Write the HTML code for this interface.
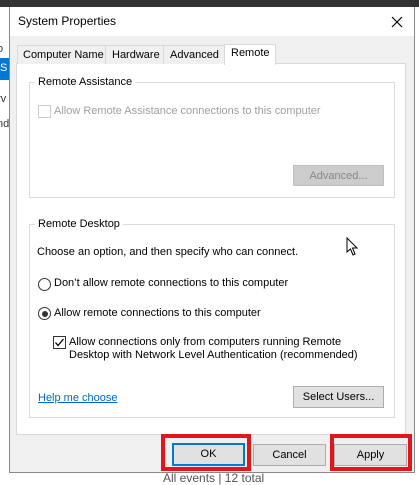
<!DOCTYPE html>
<html><head><style>
*{margin:0;padding:0;box-sizing:border-box}
body{width:419px;height:482px;overflow:hidden;background:#fff;font-family:"Liberation Sans",sans-serif;font-size:11px;color:#000;position:relative}
.a{position:absolute}
.t{position:absolute;white-space:nowrap}
.btn{position:absolute;background:#e1e1e1;border:1px solid #adadad;text-align:center;line-height:20px}
</style></head><body>
<div class="a" style="left:0;top:0;width:419px;height:7px;background:#333"></div>
<div class="a" style="left:0;top:58px;width:9px;height:22px;background:#0078d7"></div>
<div class="t" style="left:0;top:62px;color:#fff">S</div>
<div class="t" style="left:-3px;top:93px;color:#333">rv</div>
<div class="t" style="left:-3px;top:118px;color:#333">nd</div>
<div class="t" style="left:-3px;top:43px;color:#333">o</div>
<div class="t" style="left:163px;top:471px;color:#555;font-size:12px">All events | 12 total</div>
<div class="a" style="left:414px;top:7px;width:5px;height:475px;background:#fff"></div>
<!-- dialog -->
<div class="a" style="left:9px;top:7px;width:406px;height:466px;background:#f0f0f0;border:1px solid #888"></div>
<div class="a" style="left:10px;top:7px;width:404px;height:29px;background:#fff"></div>
<div class="t" style="left:18px;top:14px;font-size:12px">System Properties</div>
<svg class="a" style="left:391px;top:16px" width="12" height="12"><path d="M1 1L11 11M11 1L1 11" stroke="#000" stroke-width="1.2"/></svg>
<!-- tabs -->
<div class="a" style="left:16px;top:63px;width:390px;height:372px;background:#fff;border:1px solid #d9d9d9"></div>
<div class="a" style="left:17px;top:45px;width:89px;height:19px;border:1px solid #d9d9d9;border-bottom:none;background:#f0f0f0"></div>
<div class="t" style="left:23px;top:49px">Computer Name</div>
<div class="a" style="left:105px;top:45px;width:59px;height:19px;border:1px solid #d9d9d9;border-bottom:none;background:#f0f0f0"></div>
<div class="t" style="left:112px;top:49px">Hardware</div>
<div class="a" style="left:163px;top:45px;width:62px;height:19px;border:1px solid #d9d9d9;border-bottom:none;background:#f0f0f0"></div>
<div class="t" style="left:170px;top:49px">Advanced</div>
<div class="a" style="left:224px;top:44px;width:52px;height:21px;border:1px solid #d9d9d9;border-bottom:none;background:#fff"></div>
<div class="t" style="left:231px;top:47px">Remote</div>
<!-- group 1 -->
<div class="a" style="left:29px;top:82px;width:366px;height:116px;border:1px solid #dcdcdc"></div>
<div class="t" style="left:35px;top:76px;background:#fff;padding:0 3px">Remote Assistance</div>
<div class="a" style="left:38px;top:105px;width:13px;height:13px;border:1px solid #ccc;background:#fff"></div>
<div class="t" style="left:54px;top:105px;color:#a0a0a0">Allow Remote Assistance connections to this computer</div>
<div class="btn" style="left:293px;top:165px;width:91px;height:21px;background:#ccc;border-color:#bfbfbf;color:#888">Advanced...</div>
<!-- group 2 -->
<div class="a" style="left:29px;top:224px;width:366px;height:194px;border:1px solid #dcdcdc"></div>
<div class="t" style="left:35px;top:218px;background:#fff;padding:0 3px">Remote Desktop</div>
<div class="t" style="left:37px;top:246px">Choose an option, and then specify who can connect.</div>
<div class="a" style="left:38px;top:278px;width:13px;height:13px;border:1px solid #333;border-radius:50%"></div>
<div class="t" style="left:54px;top:277px">Don’t allow remote connections to this computer</div>
<div class="a" style="left:38px;top:307px;width:13px;height:13px;border:1px solid #333;border-radius:50%"></div>
<div class="a" style="left:41.5px;top:310.5px;width:6px;height:6px;background:#333;border-radius:50%"></div>
<div class="t" style="left:54px;top:307px">Allow remote connections to this computer</div>
<div class="a" style="left:53px;top:336px;width:13px;height:13px;border:1px solid #333;background:#fff"></div>
<svg class="a" style="left:53px;top:336px" width="13" height="13"><path d="M2.5 6.5L5 9.5L10.5 3" stroke="#000" stroke-width="1.3" fill="none"/></svg>
<div class="t" style="left:69px;top:336px;line-height:13px">Allow connections only from computers running Remote<br>Desktop with Network Level Authentication (recommended)</div>
<div class="t" style="left:38px;top:392px;color:#0066cc;text-decoration:underline">Help me choose</div>
<div class="btn" style="left:293px;top:386px;width:91px;height:22px">Select Users...</div>
<svg class="a" style="left:346px;top:237px" width="14" height="20"><path d="M1 1L1 15L4.5 12L7 18L9 17L6.5 11L11 11Z" fill="#fff" stroke="#000" stroke-width="1"/></svg>
<!-- bottom buttons -->
<div class="btn" style="left:172px;top:443px;width:73px;height:23px;border:2px solid #0078d7;line-height:19px">OK</div>
<div class="btn" style="left:253px;top:444px;width:73px;height:22px">Cancel</div>
<div class="btn" style="left:334px;top:444px;width:73px;height:22px">Apply</div>
<div class="a" style="left:161px;top:434px;width:90px;height:37px;border:4px solid #e4141b"></div>
<div class="a" style="left:330px;top:434px;width:82px;height:37px;border:4px solid #e4141b"></div>
</body></html>
